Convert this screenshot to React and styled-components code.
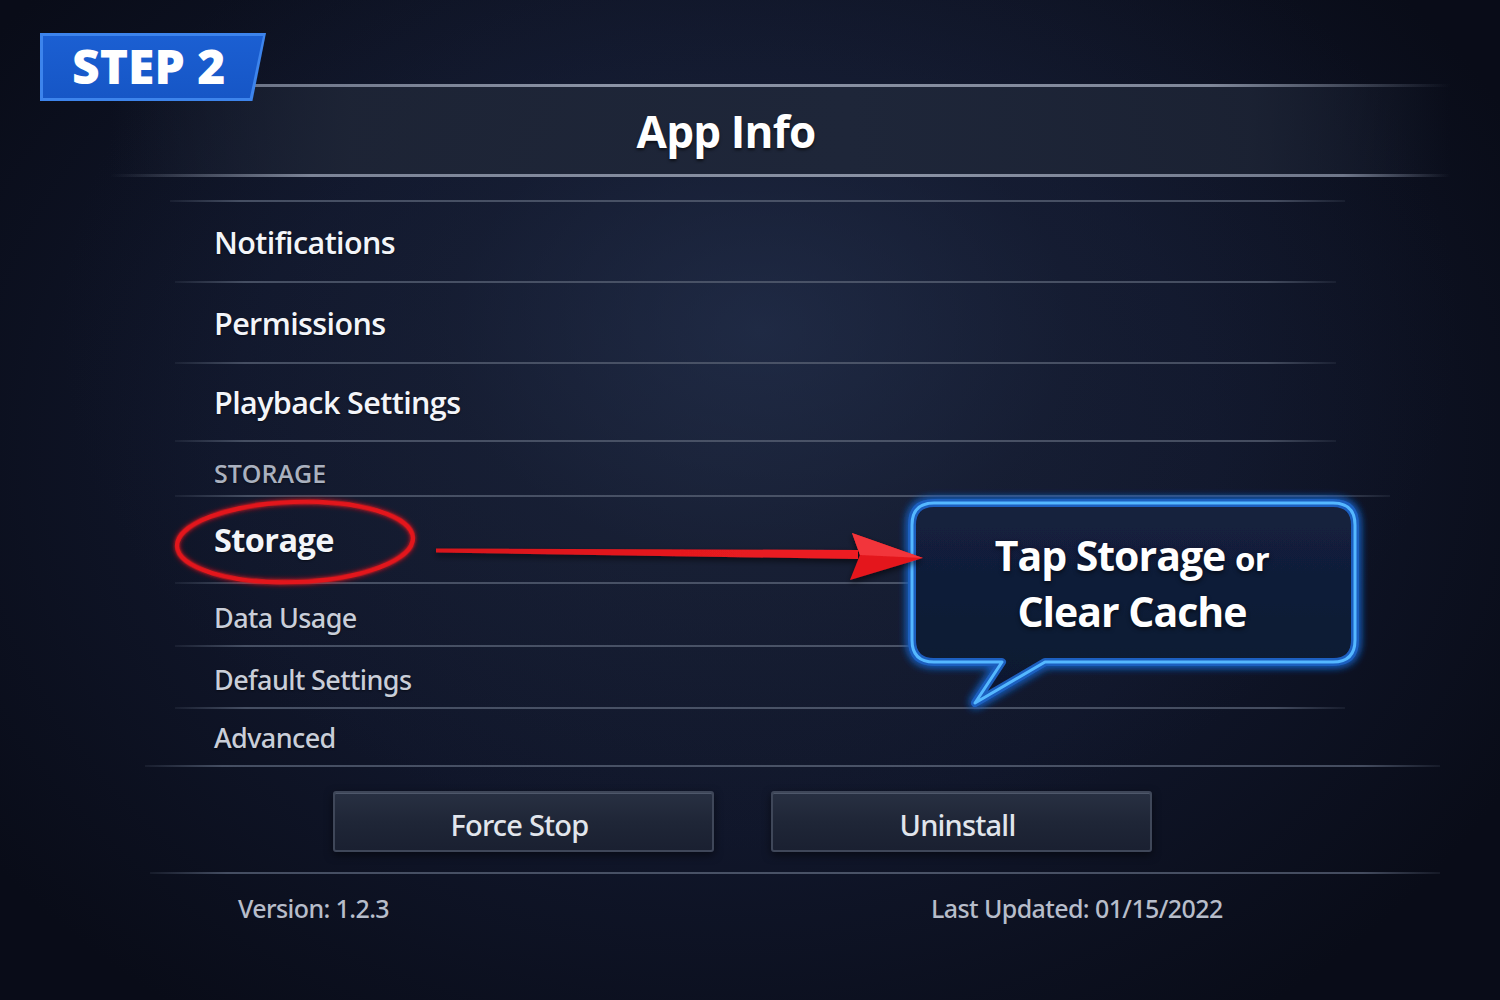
import React from "react";
import styled, { createGlobalStyle } from "styled-components";

const Global = createGlobalStyle`
  html, body { margin: 0; padding: 0; background: #0a0d1a; }
  body { font-family: "Open Sans", "Noto Sans", sans-serif; }
  * { box-sizing: border-box; }
`;

const MEDIUM = `"Noto Sans", "Open Sans", sans-serif`;

const Page = styled.div`
  position: relative;
  width: 1500px;
  height: 1000px;
  overflow: hidden;
  padding-top: 84px;
  background:
    radial-gradient(ellipse 700px 520px at 760px 330px, rgba(40, 54, 86, 0.55) 0%, rgba(30, 40, 66, 0.3) 45%, rgba(0,0,0,0) 100%),
    radial-gradient(ellipse 900px 700px at 720px 450px, #161d30 0%, #10162a 55%, #090c18 100%);
`;

const Header = styled.header`
  position: relative;
  margin-left: 110px;
  width: 1340px;
  height: 93px;
  padding-right: 108px;
  display: flex;
  align-items: center;
  justify-content: center;
  background: linear-gradient(90deg, rgba(30,37,54,0) 0%, rgba(30,37,54,0.9) 18%, #1e2639 55%, rgba(28,35,52,0.9) 85%, rgba(28,35,52,0) 100%);
  &::before {
    content: "";
    position: absolute;
    top: 0;
    left: 145px;
    right: 0;
    height: 3px;
    background: linear-gradient(90deg, #6d7588 0%, #8c94a6 30%, #7f8799 80%, rgba(90,98,115,0) 100%);
  }
  &::after {
    content: "";
    position: absolute;
    bottom: 0;
    left: 0;
    right: 0;
    height: 3px;
    background: linear-gradient(90deg, rgba(120,128,145,0) 0%, #7c8497 15%, #8a92a4 60%, #6f778a 92%, rgba(90,98,115,0) 100%);
  }
`;

const Title = styled.h1`
  margin: 0;
  color: #ffffff;
  font-size: 44px;
  font-weight: 700;
  letter-spacing: -0.8px;
  text-shadow: 0 2px 3px rgba(0,0,0,0.6);
`;

const List = styled.section`
  margin-top: 23px;
  display: flex;
  flex-direction: column;
`;

const Divider = styled.div`
  height: 2px;
  margin-left: ${p => p.$from}px;
  width: ${p => p.$to - p.$from}px;
  background: linear-gradient(90deg, rgba(70,79,97,0.2) 0%, #454e62 6%, #4a5367 60%, #444c5f 94%, rgba(70,79,97,0.2) 100%);
`;

const Row = styled.div`
  height: ${p => p.$h}px;
  padding-left: 214px;
  padding-top: ${p => p.$pt || 0}px;
  display: flex;
  align-items: center;
`;

const sizes = { main: 30.5, focus: 32.5, section: 25, sub: 27 };

const RowText = styled.span`
  font-family: ${p => (p.$kind === "sub" ? MEDIUM : "inherit")};
  font-size: ${p => sizes[p.$kind]}px;
  font-weight: ${p => (p.$kind === "sub" ? 500 : p.$kind === "focus" ? 700 : 600)};
  color: ${p => (p.$kind === "section" ? "#aab1bf" : p.$kind === "sub" ? "#c9ced9" : "#f3f5f9")};
  letter-spacing: ${p => (p.$kind === "section" ? "0px" : "-0.6px")};
  text-shadow: 0 1px 2px rgba(0,0,0,0.5);
`;

const Buttons = styled.div`
  margin-top: 24px;
  padding-left: 333px;
  display: flex;
  gap: 57px;
`;

const Button = styled.button`
  width: 381px;
  height: 61px;
  border-radius: 3px;
  border: 2px solid #3f4759;
  background: linear-gradient(180deg, #283042 0%, #1f2637 50%, #1a2031 100%);
  box-shadow: inset 0 1px 0 rgba(150,160,180,0.35), 0 3px 8px rgba(0,0,0,0.5);
  color: #e1e5ec;
  font-family: ${MEDIUM};
  font-size: 29px;
  font-weight: 500;
  letter-spacing: -0.8px;
  padding: 6px 8px 0 0;
`;

const Footer = styled.footer`
  margin-top: 20px;
  display: flex;
  flex-direction: column;
`;

const FooterRow = styled.div`
  display: grid;
  grid-template-columns: 693px auto;
  padding-left: 238px;
  height: 68px;
  align-items: center;
  color: #b7bdca;
  font-family: ${MEDIUM};
  font-size: 25px;
  font-weight: 500;
  letter-spacing: -0.6px;
`;

/* Annotation overlays */
const Badge = styled.div`
  position: absolute;
  left: 40px;
  top: 33px;
  width: 226px;
  height: 68px;
  padding: 3px;
  background: #3d84ec;
  clip-path: polygon(0 0, 100% 0, 94% 100%, 0 100%);
`;

const BadgeInner = styled.div`
  width: 100%;
  height: 100%;
  display: flex;
  align-items: center;
  padding-left: 29px;
  background: linear-gradient(180deg, #1b5fd2 0%, #1656c6 100%);
  clip-path: polygon(0 0, 100% 0, 94% 100%, 0 100%);
  color: #fff;
  font-size: 48px;
  font-weight: 800;
  padding-bottom: 3px;
`;

const Overlay = styled.svg`
  position: absolute;
  left: ${p => p.$x}px;
  top: ${p => p.$y}px;
  overflow: visible;
`;

const Callout = styled.div`
  position: absolute;
  left: 905px;
  top: 495px;
  width: 460px;
  height: 215px;
`;

const CalloutShape = styled.svg`
  position: absolute;
  inset: 0;
  overflow: visible;
`;

const CalloutText = styled.div`
  position: relative;
  width: 460px;
  padding-top: 34px;
  padding-right: 6px;
  text-align: center;
  color: #ffffff;
  font-size: 41px;
  font-weight: 700;
  line-height: 53px;
  letter-spacing: -1px;
  text-shadow: 0 2px 4px rgba(0,0,0,0.6);
`;

const Small = styled.span`
  font-size: 33px;
  letter-spacing: -0.5px;
`;

const rows = [
  { label: "Notifications", kind: "main", h: 79 },
  { label: "Permissions", kind: "main", h: 79 },
  { label: "Playback Settings", kind: "main", h: 76 },
  { label: "STORAGE", kind: "section", h: 53, pt: 8 },
  { label: "Storage", kind: "focus", h: 85 },
  { label: "Data Usage", kind: "sub", h: 61, pt: 6 },
  { label: "Default Settings", kind: "sub", h: 60, pt: 4 },
  { label: "Advanced", kind: "sub", h: 56, pt: 0 },
];

const dividerSpans = [
  [175, 1336],
  [175, 1336],
  [175, 1336],
  [175, 1390],
  [175, 1340],
  [175, 1340],
  [175, 1345],
  [145, 1440],
];

const bubblePath =
  "M29 8 H428 Q450 8 450 30 V145 Q450 167 428 167 H140 L70 208 L97 167 H29 Q7 167 7 145 V30 Q7 8 29 8 Z";

export default function App() {
  return (
    <>
      <Global />
      <Page>
        <Header>
          <Title>App Info</Title>
        </Header>
        <List>
          <Divider $from={170} $to={1345} />
          {rows.map((r, i) => (
            <React.Fragment key={r.label}>
              <Row $h={r.h} $pt={r.pt}>
                <RowText $kind={r.kind}>{r.label}</RowText>
              </Row>
              <Divider $from={dividerSpans[i][0]} $to={dividerSpans[i][1]} />
            </React.Fragment>
          ))}
        </List>
        <Buttons>
          <Button>Force Stop</Button>
          <Button>Uninstall</Button>
        </Buttons>
        <Footer>
          <Divider $from={150} $to={1440} />
          <FooterRow>
            <span>Version: 1.2.3</span>
            <span>Last Updated: 01/15/2022</span>
          </FooterRow>
        </Footer>

        <Badge>
          <BadgeInner>STEP 2</BadgeInner>
        </Badge>

        <Overlay $x={170} $y={495} width="250" height="95" viewBox="0 0 250 95">
          <defs>
            <filter id="redglow" x="-20%" y="-30%" width="140%" height="160%">
              <feGaussianBlur stdDeviation="2.5" result="b" />
              <feMerge>
                <feMergeNode in="b" />
                <feMergeNode in="SourceGraphic" />
              </feMerge>
            </filter>
          </defs>
          <ellipse cx="125" cy="47" rx="118" ry="40" fill="none" stroke="#e3151b" strokeWidth="4.5"
            transform="rotate(-2 125 47)" filter="url(#redglow)" />
        </Overlay>

        <Callout>
          <CalloutShape width="460" height="215" viewBox="0 0 460 215">
            <defs>
              <linearGradient id="bubbleFill" x1="0" y1="0" x2="0" y2="1">
                <stop offset="0" stopColor="#13213e" />
                <stop offset="1" stopColor="#0d1830" />
              </linearGradient>
              <filter id="blueglow" x="-10%" y="-20%" width="120%" height="140%">
                <feGaussianBlur stdDeviation="5" result="b" />
                <feMerge>
                  <feMergeNode in="b" />
                  <feMergeNode in="b" />
                  <feMergeNode in="SourceGraphic" />
                </feMerge>
              </filter>
            </defs>
            <path d={bubblePath} fill="url(#bubbleFill)" stroke="#1f5fbf" strokeWidth="8"
              strokeLinejoin="round" filter="url(#blueglow)" />
            <path d={bubblePath} fill="none" stroke="#55b8ff" strokeWidth="3" strokeLinejoin="round" />
          </CalloutShape>
          <CalloutText>
            Tap Storage <Small>or</Small>
            <br />
            Clear Cache
          </CalloutText>
        </Callout>

        <Overlay $x={430} $y={525} width="500" height="65" viewBox="0 0 500 65">
          <defs>
            <linearGradient id="arrowG" x1="0" y1="0" x2="1" y2="0">
              <stop offset="0" stopColor="#d8151a" />
              <stop offset="1" stopColor="#ee1c22" />
            </linearGradient>
            <filter id="ashadow" x="-10%" y="-50%" width="120%" height="200%">
              <feDropShadow dx="0" dy="3" stdDeviation="3" floodColor="#000" floodOpacity="0.6" />
            </filter>
          </defs>
          <g filter="url(#ashadow)">
            <path d="M6 23.5 L428 25 L428 34 L6 27.5 Z" fill="url(#arrowG)" />
            <path d="M422 8 L493 33 L420 55 L430 30 Z" fill="#e4181e" />
            <path d="M422 8 L493 33 L430 30 Z" fill="#f2353a" />
          </g>
        </Overlay>
      </Page>
    </>
  );
}
